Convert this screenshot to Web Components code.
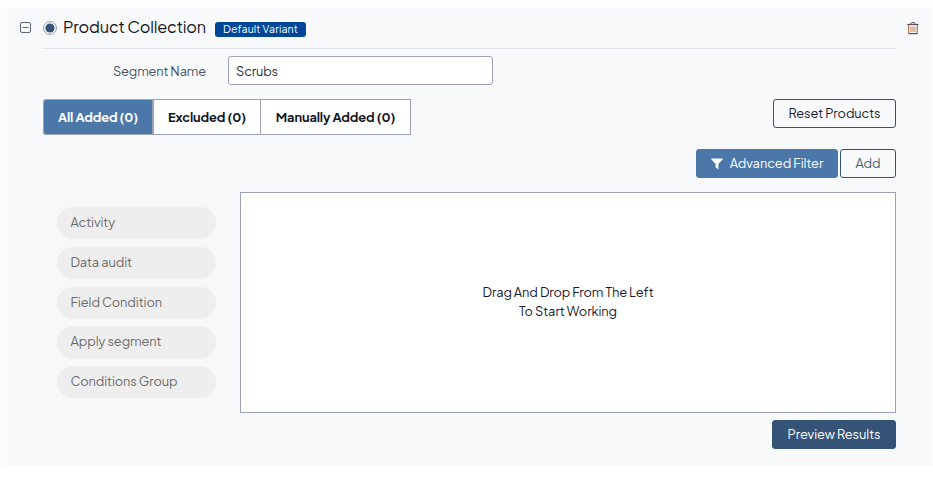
<!DOCTYPE html>
<html lang="en">
<head>
<meta charset="utf-8">
<title>Product Collection</title>
<style>
html{background:#fff}
body{margin:0;font-family:"Plus Jakarta Sans",Inter,"Open Sans",sans-serif;font-size:12.8px;line-height:19px;color:#16202e}
</style>
</head>
<body>
<collection-page></collection-page>
<script>
const define = (name, html, setup) => {
  const template = document.createElement('template');
  template.innerHTML = html;
  customElements.define(name, class extends HTMLElement {
    connectedCallback() {
      if (this.shadowRoot) return;
      this.attachShadow({mode: 'open'}).append(template.content.cloneNode(true));
      if (setup) setup(this);
    }
  });
};

// A label tracked so that its line fills the width given in "w".
define('tracked-text', `<style>
:host{display:inline-block;white-space:nowrap}
span{display:inline-block}
</style><span><slot></slot></span>`, host => {
  const span = host.shadowRoot.querySelector('span');
  const want = parseFloat(host.getAttribute('w'));
  const have = span.getBoundingClientRect().width;
  const gap = (want - have) / host.textContent.length;
  span.style.letterSpacing = gap.toFixed(3) + 'px';
  host.style.width = want + 'px';
});

define('collapse-icon', `<style>:host{display:block;width:12px;height:12px}svg{display:block}</style>
<svg width="12" height="12" fill="none" stroke="#5b6478"><rect x=".5" y=".5" width="10" height="10" rx="1.5"/><path d="M2.5 5.5h6"/></svg>`);

define('radio-dot', `<style>:host{display:block;width:14px;height:14px}svg{display:block}</style>
<svg width="14" height="14"><circle cx="7" cy="7" r="6.4" fill="#fff" stroke="#8e96ab"/><circle cx="7" cy="7" r="4.6" fill="#355377"/></svg>`);

define('trash-icon', `<style>:host{display:block;width:12px;height:13px}svg{display:block}</style>
<svg width="12" height="13" fill="none"><path d="M.3 2.5h11.2" stroke="#55505a" stroke-width="1.2"/><path d="M3.6 2.2L4.6.6h2.7l1 1.6" stroke="#55505a"/><path d="M1.6 3v8.5M10.3 3v8.5" stroke="#b5774d" stroke-width="1.2"/><path d="M1.6 11.6h8.8" stroke="#55505a" stroke-width="1.2"/><path d="M4 4.5v5.4M8 4.5v5.4" stroke="#d98a4c" stroke-width="1.1"/><path d="M6 4.5v5.4" stroke="#b58563"/></svg>`);

define('filter-icon', `<style>:host{display:block;width:12px;height:12px}svg{display:block}</style>
<svg width="12" height="12"><path d="M.3.4h11.4q.4.4 0 .9L7.4 6v5.5L4.6 9.2V6L.3 1.3Q-.1.8.3.4z" fill="#fff"/></svg>`);

define('status-badge', `<style>:host{box-sizing:border-box;display:flex;justify-content:center;width:91px;height:15px;line-height:14px;font-size:10.5px;border-radius:3px;background:#004799;color:#fff}</style><slot></slot>`);

define('ui-button', `<style>
:host{box-sizing:border-box;display:flex;align-items:center;justify-content:center;gap:7px;height:29px;border:1px solid #355377;border-radius:3px}
:host([kind=blue]){background:#4b77a9;border-color:#4b77a9;color:#fff}
:host([kind=navy]){background:#355377;color:#fff}
:host([kind=quiet]){color:#4f5d70}
</style><slot></slot>`);

define('tab-item', `<style>
:host{box-sizing:border-box;display:flex;align-items:center;justify-content:center;height:36px;border:1px solid #9ba2b8;border-left-width:0;background:#fff;font-weight:700;color:#12161e}
:host(:first-child){border-left-width:1px;border-radius:3px 0 0 3px}
:host([active]){background:#4b77a9;color:#fff;border-right-width:2px}
</style><slot></slot>`);

define('tab-bar', `<style>:host{display:flex}</style><slot></slot>`);

define('text-field', `<style>:host{box-sizing:border-box;display:flex;align-items:center;width:265px;height:29px;padding:2px 0 0 7px;border:1px solid #9ba2b8;border-radius:3px;background:#fff;color:#27303d}</style><slot></slot>`);

define('condition-pill', `<style>:host{box-sizing:border-box;display:flex;align-items:center;height:32.25px;padding:0 0 1px 13.5px;border-radius:16px;background:#eee;color:#6c6c6c}</style><slot></slot>`);

define('condition-list', `<style>:host{box-sizing:border-box;display:flex;flex-direction:column;gap:7.5px;width:188px;height:221px;padding:15px 15px 0 14px;background:#f8f8f8}</style><slot></slot>`);

define('drop-canvas', `<style>:host{box-sizing:border-box;display:flex;flex-direction:column;align-items:center;justify-content:center;flex:1;height:221px;padding-bottom:2px;border:1px solid #9ba2b8;background:#fff}</style><slot></slot>`);

define('collection-page', `<style>
:host{display:block;box-sizing:border-box;height:466px;padding:9px 1px 0 7px;background:#fdfdfd}
main{display:flex;flex-direction:column;box-sizing:border-box;height:457px;padding:0 36px;background:#f8f9fb;border-radius:3px 3px 0 0}
header{display:flex;align-items:center;margin:0 -24px 0 -23px;height:38px}
h1{margin:0 9px 2px 6px;font-size:16.3px;font-weight:400;line-height:22px;color:#12161e}
collapse-icon{margin-right:11px}
status-badge{margin-top:3px}
trash-icon{margin-left:auto;margin-right:1px}
hr{box-sizing:border-box;width:100%;height:2px;margin:0;border:0;border-top:1px solid #dfe2e6;margin-top:1px}
.row{display:flex}
.name{align-items:center;margin-top:6px;padding-left:70px;gap:22px;color:#4a5362}
.name > tracked-text{margin-top:2px}
.tabs{justify-content:space-between;margin-top:14px}
.actions{justify-content:flex-end;gap:2px;margin-top:14px}
.work{gap:9px;margin-top:14px}
.foot{justify-content:flex-end;margin-top:7px}
</style>
<main>
<header><collapse-icon></collapse-icon><radio-dot></radio-dot><h1><tracked-text w="143">Product Collection</tracked-text></h1><status-badge><tracked-text w="75">Default Variant</tracked-text></status-badge><trash-icon></trash-icon></header>
<hr>
<div class="row name"><tracked-text w="93">Segment Name</tracked-text><text-field><tracked-text w="42">Scrubs</tracked-text></text-field></div>
<div class="row tabs">
<tab-bar>
<tab-item active style="width:111px"><tracked-text w="80">All Added (0)</tracked-text></tab-item><tab-item style="width:107px"><tracked-text w="78">Excluded (0)</tracked-text></tab-item><tab-item style="width:150px"><tracked-text w="119.5">Manually Added (0)</tracked-text></tab-item>
</tab-bar>
<ui-button style="width:123px"><tracked-text w="92">Reset Products</tracked-text></ui-button>
</div>
<div class="row actions"><ui-button kind="blue" style="width:142px"><filter-icon></filter-icon><tracked-text w="93.5">Advanced Filter</tracked-text></ui-button><ui-button kind="quiet" style="width:56px"><tracked-text w="25">Add</tracked-text></ui-button></div>
<div class="row work">
<condition-list>
<condition-pill><tracked-text w="44.5">Activity</tracked-text></condition-pill>
<condition-pill><tracked-text w="61.5">Data audit</tracked-text></condition-pill>
<condition-pill><tracked-text w="91.5">Field Condition</tracked-text></condition-pill>
<condition-pill><tracked-text w="91">Apply segment</tracked-text></condition-pill>
<condition-pill><tracked-text w="107">Conditions Group</tracked-text></condition-pill>
</condition-list>
<drop-canvas><tracked-text w="171">Drag And Drop From The Left</tracked-text><tracked-text w="98">To Start Working</tracked-text></drop-canvas>
</div>
<div class="row foot"><ui-button kind="navy" style="width:124px"><tracked-text w="93">Preview Results</tracked-text></ui-button></div>
</main>`);
</script>
</body>
</html>
